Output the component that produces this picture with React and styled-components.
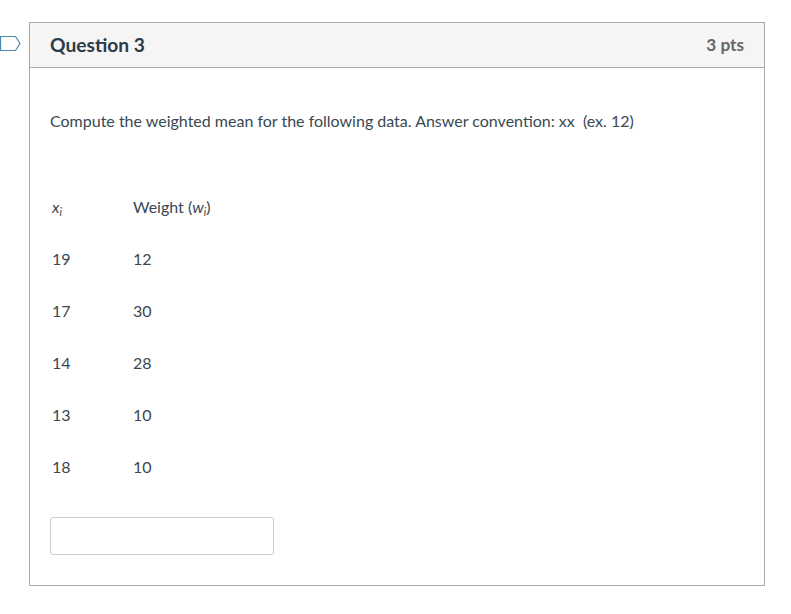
import React from "react";
import styled, { createGlobalStyle } from "styled-components";

const Global = createGlobalStyle`
  html, body { margin: 0; padding: 0; background: #fff; }
  body { font-family: Lato, "Open Sans", sans-serif; color: #3a4852; }
`;
const Page = styled.div`
  position: relative;
  width: 791px;
  height: 614px;
  padding: 22px 26px 0 29px;
  box-sizing: border-box;
`;
const Flag = styled.svg`
  position: absolute;
  left: -1px;
  top: 35px;
`;
const Card = styled.section`
  height: 564px;
  box-sizing: border-box;
  border: 1px solid #aaaaaa;
  display: flex;
  flex-direction: column;
`;
const Header = styled.header`
  height: 44px;
  flex: none;
  background: #f5f5f5;
  border-bottom: 1px solid #aaaaaa;
  display: flex;
  align-items: center;
  justify-content: space-between;
  padding: 0 20px;
  line-height: 42px;
`;
const Title = styled.h2`
  margin: 0;
  font-size: 19.2px;
  font-weight: 700;
  color: #2d3b45;
`;
const Points = styled.span`
  font-size: 17.2px;
  font-weight: 700;
  color: #666666;
`;
const Body = styled.div`
  padding: 0 20px;
  flex: 1;
  display: flex;
  flex-direction: column;
`;
const Prompt = styled.p`
  margin: 42px 0 0;
  font-size: 16px;
  line-height: 22px;
  white-space: pre;
`;
const DataTable = styled.table`
  border-collapse: collapse;
  margin-top: 48px;
  font-size: 16px;
`;
const Cell = styled.td`
  height: 52px;
  padding: 0 0 0 2px;
  width: ${(p) => p.$w}px;
  vertical-align: middle;
  box-sizing: border-box;
`;
const Sub = styled.sub`
  font-size: 11px;
  font-style: italic;
  line-height: 0;
  vertical-align: -3px;
`;
const Answer = styled.input`
  display: block;
  width: 224px;
  height: 38px;
  box-sizing: border-box;
  margin-top: 25px;
  background: #fff;
  border: 1px solid #c7cdd1;
  border-radius: 3px;
`;

const rows = [
  [19, 12],
  [17, 30],
  [14, 28],
  [13, 10],
  [18, 10],
];

export default function App() {
  return (
    <Page>
      <Global />
      <Flag width="22" height="17" viewBox="0 0 22 17" aria-hidden="true">
        <path d="M1.5 1.5H16.5L21 8.5L16.5 15.5H1.5Z" fill="#fff" stroke="#4b87ab" strokeWidth="1.2" />
      </Flag>
      <Card>
        <Header>
          <Title>Question 3</Title>
          <Points>3 pts</Points>
        </Header>
        <Body>
          <Prompt>Compute the weighted mean for the following data. Answer convention: xx  (ex. 12)</Prompt>
          <DataTable>
            <tbody>
              <tr>
                <Cell $w={81}>
                  <em>x</em>
                  <Sub>i</Sub>
                </Cell>
                <Cell>
                  Weight (<em>w</em>
                  <Sub>i</Sub>)
                </Cell>
              </tr>
              {rows.map(([x, w], i) => (
                <tr key={i}>
                  <Cell $w={81}>{x}</Cell>
                  <Cell>{w}</Cell>
                </tr>
              ))}
            </tbody>
          </DataTable>
          <Answer type="text" aria-label="Answer" />
        </Body>
      </Card>
    </Page>
  );
}
